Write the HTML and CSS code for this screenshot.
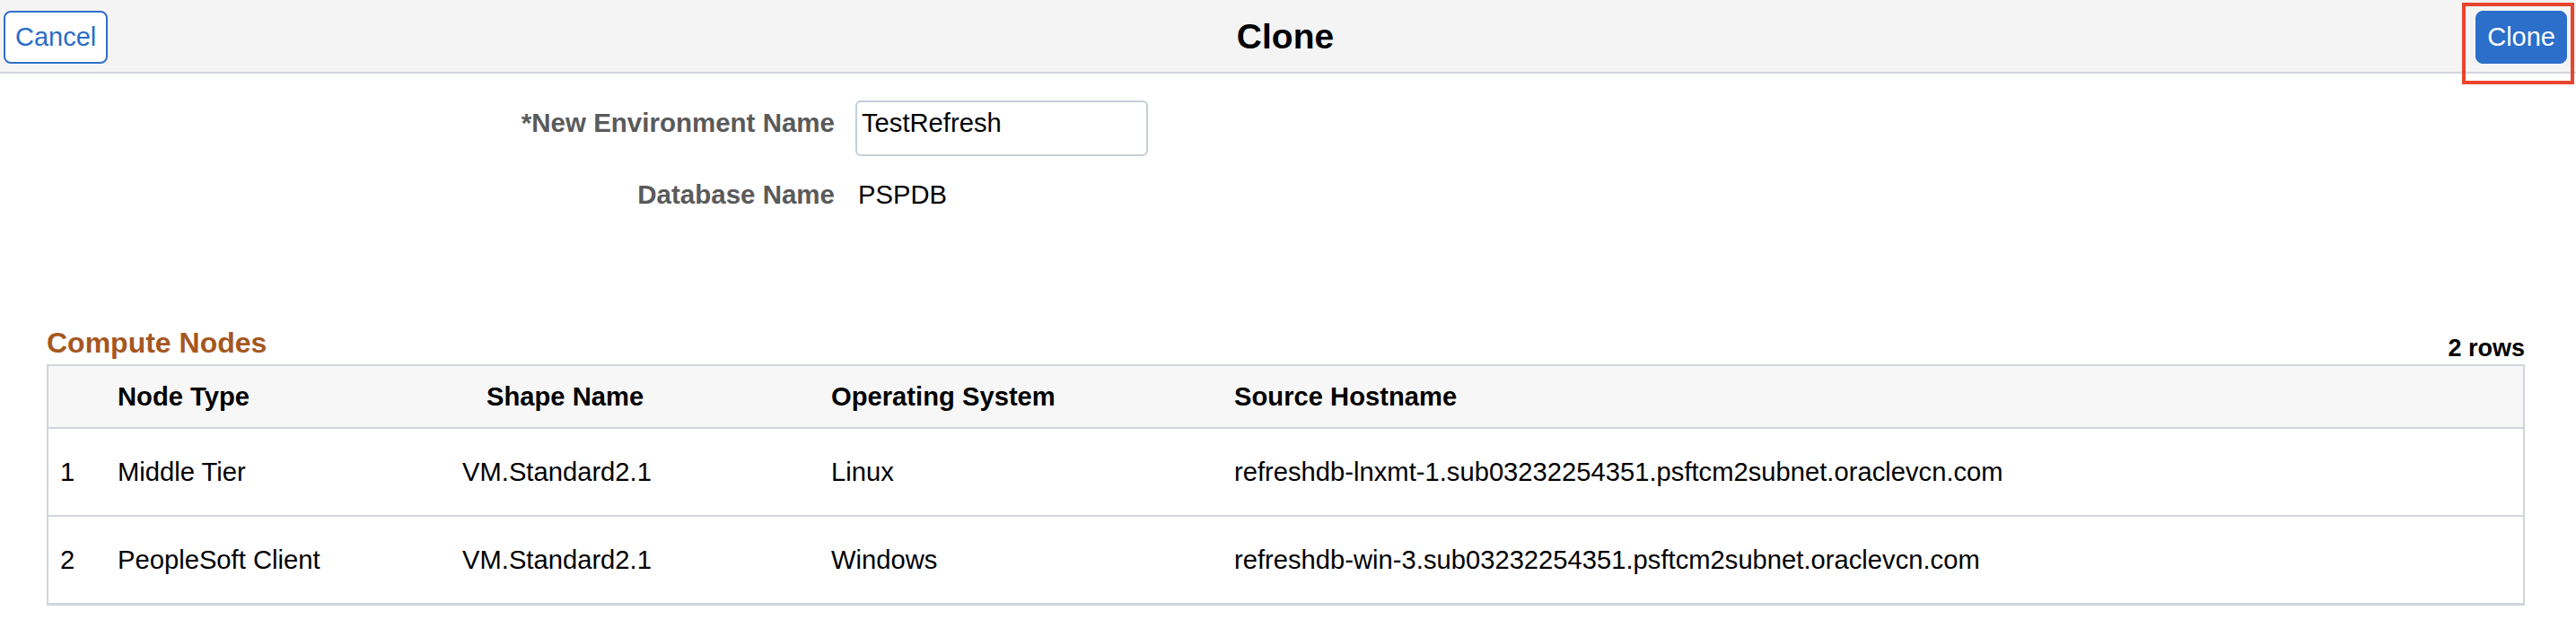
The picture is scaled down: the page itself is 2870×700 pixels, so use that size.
FILE: index.html
```html
<!DOCTYPE html>
<html lang="en">
<head>
<meta charset="utf-8">
<title>Clone</title>
<link rel="stylesheet" href="styles.css">
</head>
<body>
<header class="topbar">
  <div class="topbar-left">
    <button class="btn btn-secondary" type="button">Cancel</button>
  </div>
  <h1 class="page-title">Clone</h1>
  <div class="topbar-right">
    <span class="btn-wrap">
      <button class="btn btn-primary" type="button">Clone</button>
      <span class="highlight"></span>
    </span>
  </div>
</header>

<main class="content">
  <div class="form">
    <label class="form-label" for="envname">*New Environment Name</label>
    <div class="text-field" id="envname">TestRefresh</div>
    <div class="form-label">Database Name</div>
    <div class="form-value">PSPDB</div>
  </div>

  <section class="grid-section">
    <div class="grid-caption">
      <h2 class="grid-title">Compute Nodes</h2>
      <div class="grid-count">2 rows</div>
    </div>
    <table class="grid">
      <colgroup>
        <col class="c-num">
        <col class="c-type">
        <col class="c-shape">
        <col class="c-os">
        <col class="c-host">
      </colgroup>
      <thead>
        <tr>
          <th></th>
          <th>Node Type</th>
          <th class="th-shape">Shape Name</th>
          <th>Operating System</th>
          <th>Source Hostname</th>
        </tr>
      </thead>
      <tbody>
        <tr>
          <td>1</td>
          <td>Middle Tier</td>
          <td>VM.Standard2.1</td>
          <td>Linux</td>
          <td>refreshdb-lnxmt-1.sub03232254351.psftcm2subnet.oraclevcn.com</td>
        </tr>
        <tr>
          <td>2</td>
          <td>PeopleSoft Client</td>
          <td>VM.Standard2.1</td>
          <td>Windows</td>
          <td>refreshdb-win-3.sub03232254351.psftcm2subnet.oraclevcn.com</td>
        </tr>
      </tbody>
    </table>
  </section>
</main>
</body>
</html>
```

FILE: styles.css
```css
* {
  box-sizing: border-box;
}

html, body {
  margin: 0;
  padding: 0;
  background: #ffffff;
}

body {
  font-family: "Liberation Sans", Arial, Helvetica, sans-serif;
  font-size: 29.2px;
  color: #000000;
}

/* ---------- top bar ---------- */
.topbar {
  display: grid;
  grid-template-columns: 1fr auto 1fr;
  align-items: center;
  height: 82px;
  padding: 2px 10px 0 4px;
  background: #f4f4f4;
  border-bottom: 2px solid #d1d5da;
}

.topbar-left {
  display: flex;
  justify-content: flex-start;
}

.topbar-right {
  display: flex;
  justify-content: flex-end;
}

.page-title {
  margin: 0;
  font-size: 39px;
  font-weight: bold;
  line-height: 44px;
  color: #000000;
}

.btn {
  font-family: "Liberation Sans", Arial, Helvetica, sans-serif;
  font-size: 29px;
  line-height: 34px;
  height: 59px;
  border-radius: 8px;
  cursor: pointer;
  display: inline-flex;
  align-items: center;
}

.btn-secondary {
  background: #ffffff;
  color: #2a6cc6;
  border: 2px solid #2e6fc8;
  padding: 0 11px;
}

.btn-primary {
  background: #2c6fca;
  color: #ffffff;
  border: 1px solid #2c6fca;
  padding: 0 12px;
}

.btn-wrap {
  position: relative;
  display: inline-flex;
}

.highlight {
  position: absolute;
  left: -15px;
  top: -9px;
  right: -8px;
  bottom: -23px;
  border: 4px solid #e8442e;
  pointer-events: none;
}

/* ---------- content ---------- */
.content {
  padding: 0 57px 0 52px;
}

.form {
  display: grid;
  grid-template-columns: 878px 326px;
  column-gap: 23px;
  row-gap: 25px;
  align-items: baseline;
  margin-top: 30px;
}

.form-label {
  text-align: right;
  font-weight: bold;
  font-size: 29.5px;
  color: #5a5a5a;
  line-height: 36px;
}

.text-field {
  height: 62px;
  padding: 5px 4px 0 5px;
  border: 2px solid #c7ced6;
  border-radius: 6px;
  background: #ffffff;
  line-height: 36px;
  color: #000000;
}

.form-value {
  padding-left: 3px;
  line-height: 36px;
}

/* ---------- grid ---------- */
.grid-section {
  margin-top: 129px;
}

.grid-caption {
  display: flex;
  justify-content: space-between;
  align-items: flex-end;
}

.grid-title {
  margin: 0 0 6px 0;
  font-size: 32px;
  line-height: 36px;
  font-weight: bold;
  color: #a5571f;
}

.grid-count {
  margin-bottom: 3px;
  font-size: 27px;
  line-height: 30px;
  font-weight: bold;
}

.grid {
  width: 100%;
  table-layout: fixed;
  border-collapse: separate;
  border-spacing: 0;
  border: 2px solid #d1d5db;
  border-bottom-width: 3px;
}

.c-num { width: 64px; }
.c-type { width: 384px; }
.c-shape { width: 411px; }
.c-os { width: 449px; }

.grid th,
.grid td {
  text-align: left;
  vertical-align: middle;
  white-space: nowrap;
  line-height: 36px;
}

.grid th {
  background: #f7f7f7;
  font-weight: bold;
  padding: 16px 13px;
  border-bottom: 2px solid #d1d5db;
}

.grid th.th-shape {
  padding-left: 40px;
}

.grid td {
  font-weight: normal;
  padding: 30px 13px;
}

.grid tbody tr:not(:last-child) td {
  border-bottom: 2px solid #d1d5db;
}
```
